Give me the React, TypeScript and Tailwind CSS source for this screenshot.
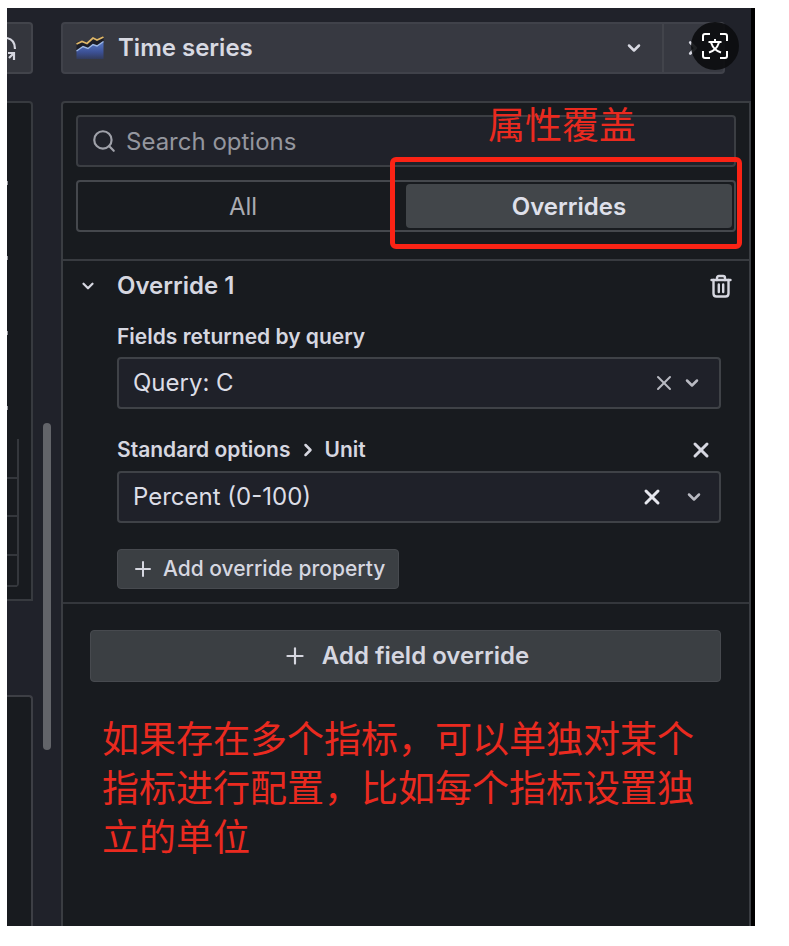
import { ChevronDown, ChevronRight, Plus, Search, X } from "lucide-react";

const gridRows = ["h-10", "h-[38px]", "h-[39px]", "h-[31px]"];

function TimeSeriesIcon() {
  return (
    <svg viewBox="0 0 28 26" className="h-[26px] w-7 shrink-0" aria-hidden="true">
      <defs>
        <linearGradient id="area" x1="0" y1="0" x2="0" y2="1">
          <stop offset="0" stopColor="#5a7cc8" />
          <stop offset="0.6" stopColor="#3c5196" />
          <stop offset="1" stopColor="#323b5c" />
        </linearGradient>
      </defs>
      <path d="M0.5 7 L7 6 L12 8 L17 3 L21 4 L27.5 1 V8 L21 12 L0.5 16 Z" fill="#1c1e28" />
      <path d="M0.5 16 L7 11.5 L12 13.5 L17 9.5 L21 11 L27.5 6.5 V24 H0.5 Z" fill="url(#area)" />
      <path d="M0.5 16 L7 11.5 L12 13.5 L17 9.5 L21 11 L27.5 6.5" fill="none" stroke="#9fb9e6" strokeWidth="1.4" />
      <path d="M0.5 9 L6 6.5 L11 8.5 L17 3 L21 5 L27.5 2" fill="none" stroke="#dfb768" strokeWidth="1.8" />
    </svg>
  );
}

function TrashIcon() {
  return (
    <svg viewBox="0 0 22 24" className="h-6 w-[22px]" fill="none" stroke="currentColor" strokeWidth="2.4" strokeLinecap="round" strokeLinejoin="round">
      <path d="M1.5 6 H20.5" />
      <path d="M7 6 V4 Q7 2 9 2 H13 Q15 2 15 4 V6" />
      <path d="M3.5 6 V19.5 Q3.5 22.5 6.5 22.5 H15.5 Q18.5 22.5 18.5 19.5 V6" />
      <path d="M8.8 10.5 V18 M13.2 10.5 V18" />
    </svg>
  );
}

function LeftColumn() {
  return (
    <div className="flex w-[26px] shrink-0 flex-col">
      <button aria-label="Refresh" className="h-[52px] rounded-r border-2 border-l-0 border-[#42444b] bg-[#34363d] text-[#d5d6df]">
        <svg viewBox="0 0 10 26" className="h-[26px] w-[10px]" fill="none" stroke="currentColor" strokeWidth="2.2">
          <path d="M0 3 C5 4 8 8 8 14" />
          <path d="M1 18 H7 V25 M7 18 L2 23" />
        </svg>
      </button>
      <div className="mt-[27px] flex h-[500px] flex-col rounded-tr border-2 border-l-0 border-[#373a3f] bg-[#181b1f]">
        <div className="flex flex-1 flex-col gap-[71px] pt-[78px]">
          <i className="h-1 w-px bg-[#9a9ba1]" />
          <i className="h-1 w-px bg-[#9a9ba1]" />
          <i className="h-1 w-px bg-[#9a9ba1]" />
          <i className="h-1 w-px bg-[#9a9ba1]" />
        </div>
        <div className="mb-3 w-3 rounded-br border-r-2 border-[#34373c]">
          {gridRows.map((h) => (
            <div key={h} className={h + " border-b-2 border-[#34373c]"} />
          ))}
        </div>
      </div>
      <div className="mt-[94px] flex-1 rounded-tr border-2 border-b-0 border-l-0 border-[#3d3f45] bg-[#181b1f]" />
    </div>
  );
}

function VizPicker() {
  return (
    <div className="relative mr-[26px] flex h-[52px] rounded border-2 border-[#40424a] bg-[#373941] text-[#d8d9e2]">
      <button className="flex flex-1 items-center pr-[18px] pl-[13px] text-left text-2xl font-semibold">
        <TimeSeriesIcon />
        <span className="ml-[14px] flex-1">Time series</span>
        <ChevronDown size={20} strokeWidth={3} />
      </button>
      <button aria-label="Close options" className="flex w-[61px] items-center border-l-2 border-[#42444b] pl-[18px]">
        <ChevronRight size={22} strokeWidth={3} />
      </button>
      <button aria-label="Translate" className="absolute -top-0.5 -right-4 flex size-12 items-center justify-center rounded-full bg-[#0b0c0e]/90 text-white">
        <svg viewBox="0 0 26 26" className="size-[26px]" fill="none" stroke="currentColor" strokeWidth="2">
          <path d="M1 8 V3 Q1 1 3 1 H8 M18 1 H23 Q25 1 25 3 V8 M25 18 V23 Q25 25 23 25 H18 M8 25 H3 Q1 25 1 23 V18" />
          <path d="M13 6 V9 M6.5 9 H19.5 M9 9.5 C10.5 14 14 18 19 19.5 M17 9.5 C15.5 14 12 18 7 19.5" />
        </svg>
      </button>
    </div>
  );
}

function OptionFilter() {
  return (
    <div className="relative border-b-2 border-[#383b40] px-[13px] pt-3 pb-[27px]">
      <label className="flex h-[52px] items-center rounded border-2 border-[#3b3e43] bg-[#20222a] pl-[13px] text-[#9fa1a9]">
        <Search size={26} strokeWidth={2} />
        <input aria-label="Search options" placeholder="Search options" className="ml-[9px] min-w-0 flex-1 bg-transparent pt-0.5 text-2xl outline-none placeholder:text-[#94969e]" />
      </label>
      <fieldset className="mt-[13px] flex h-[52px] rounded border-2 border-[#45484d] p-0.5 text-2xl">
        <label className="relative flex flex-1 items-center justify-center rounded pt-0.5 text-[#a9abb2]">
          <input type="radio" name="scope" className="sr-only" />
          All
        </label>
        <label className="relative flex flex-1 items-center justify-center rounded bg-[#42464a] pt-0.5 font-semibold text-[#dfe0ea]">
          <input type="radio" name="scope" defaultChecked className="sr-only" />
          Overrides
        </label>
      </fieldset>
      <div className="pointer-events-none absolute top-[54px] right-[7px] h-[92px] w-[352px] rounded-md border-5 border-[#fb2315]" />
      <div className="pointer-events-none absolute -top-1 right-[113px] font-['Noto_Sans_CJK_SC',sans-serif] text-[37px] leading-[49px] text-[#ea2a1f]">属性覆盖</div>
    </div>
  );
}

const selectBox = "flex h-[52px] items-center rounded border-2 border-[#3f4247] bg-[#1f2129] pl-[14px] text-[#b9bac2]";
const selectText = "h-full min-w-0 flex-1 appearance-none bg-transparent text-2xl text-[#dcdde6] outline-none";

function OverrideEditor() {
  return (
    <section className="border-b-2 border-[#34373c] pr-7 pb-[13px] pl-[54px] text-[#d6d7e0]">
      <div className="-mr-[11px] -ml-[38px] flex h-[50px] items-center">
        <button aria-expanded="true" className="flex flex-1 items-center text-left text-2xl font-semibold">
          <ChevronDown size={18} strokeWidth={3} />
          <span className="ml-5">Override 1</span>
        </button>
        <button aria-label="Remove override">
          <TrashIcon />
        </button>
      </div>
      <label htmlFor="query" className="mt-3 mb-1.5 block h-7 text-[21px] leading-7 font-semibold">Fields returned by query</label>
      <div className={selectBox}>
        <select id="query" className={selectText}>
          <option>Query: C</option>
        </select>
        <button aria-label="Clear query"><X size={24} strokeWidth={2} /></button>
        <ChevronDown size={20} strokeWidth={3} className="mr-[17px] ml-[6px]" />
      </div>
      <div className="mt-7 mb-2 flex h-[26px] items-center text-[21px] font-semibold">
        <label htmlFor="unit" className="flex flex-1 items-center">
          Standard options
          <ChevronRight size={20} strokeWidth={3} className="mx-[7px]" />
          Unit
        </label>
        <button aria-label="Remove property" className="mr-2"><X size={24} strokeWidth={3} /></button>
      </div>
      <div className={selectBox}>
        <select id="unit" className={selectText}>
          <option>Percent (0-100)</option>
        </select>
        <button aria-label="Clear unit" className="text-[#e6e7ee]"><X size={24} strokeWidth={3} /></button>
        <ChevronDown size={20} strokeWidth={3} className="mr-[15px] ml-5" />
      </div>
      <button className="mt-[26px] flex h-10 items-center rounded border border-[#474a4f] bg-[#3b3f43] px-[13px] text-[21px] font-medium">
        <Plus size={24} strokeWidth={2} className="mr-2" />
        Add override property
      </button>
    </section>
  );
}

export default function App() {
  return (
    <div className="flex min-h-screen bg-white pt-2 pr-[34px] pb-5 pl-[7px] font-[Inter,'Liberation_Sans',sans-serif]">
      <main className="flex flex-1 border-r-4 border-black bg-[#20222a] pt-[14px]">
        <LeftColumn />
        <div className="flex w-7 shrink-0 justify-center">
          <div className="mt-[401px] h-[327px] w-2 rounded-full bg-[#626469]" />
        </div>
        <div className="flex min-w-0 flex-1 flex-col">
          <VizPicker />
          <div className="mt-[27px] flex-1 rounded-tl border-2 border-b-0 border-[#3a3d42] bg-[#181b1f]">
            <OptionFilter />
            <OverrideEditor />
            <button className="mt-[26px] mr-7 ml-[27px] flex h-[52px] w-[calc(100%-55px)] items-center justify-center rounded border border-[#474a4f] bg-[#3b3f43] text-2xl font-semibold text-[#d6d7e0]">
              <Plus size={26} strokeWidth={2} className="mr-[14px]" />
              Add field override
            </button>
            <p className="mt-[31px] mr-10 ml-[39px] font-['Noto_Sans_CJK_SC',sans-serif] text-[37px] leading-[49px] text-[#ea2a1f]">
              如果存在多个指标，可以单独对某个指标进行配置，比如每个指标设置独立的单位
            </p>
          </div>
        </div>
      </main>
    </div>
  );
}
